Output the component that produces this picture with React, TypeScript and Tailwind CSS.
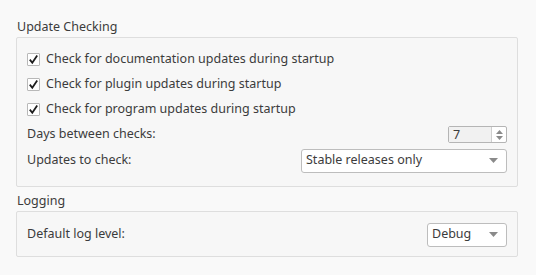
import React from 'react'

function Check({ label }: { label: string }) {
  return (
    <div className="flex items-center h-[25px]">
      <span className="w-[13px] h-[13px] border border-[#b8b8b8] bg-white rounded-[1px] flex items-center justify-center">
        <svg width="11" height="11" viewBox="0 0 11 11">
          <path d="M1.8 5.6 L4.3 8.8 L9.2 1.4" fill="none" stroke="#1e1e1e" strokeWidth="1.8" />
        </svg>
      </span>
      <span className="ml-[6px]">{label}</span>
    </div>
  )
}

function Arrow() {
  return (
    <svg width="9" height="5" viewBox="0 0 9 5"><path d="M0 0 L9 0 L4.5 5 Z" fill="#8a8a8a" /></svg>
  )
}

function Combo({ value, w }: { value: string; w: string }) {
  return (
    <div className={`${w} h-[24px] border border-[#bdbdbd] rounded-[3px] bg-white flex items-center justify-between pl-[4px] pr-[8px]`}>
      <span>{value}</span>
      <Arrow />
    </div>
  )
}

function Group({ title, children }: { title: string; children: React.ReactNode }) {
  return (
    <div>
      <div className="relative z-10 inline-block bg-[#f9f9f9] pl-[1px] pr-[1px] -mb-px leading-[18px]">{title}</div>
      <div className="border border-[#dedede] rounded-[2px] bg-[#f7f7f7] pl-[10px] pr-[10px]">{children}</div>
    </div>
  )
}

export default function App() {
  return (
    <div className="w-[536px] h-[275px] bg-[#f9f9f9] text-[#3c3c3c] text-[12.5px] pt-[18px] pl-[16px] pr-[18px]" style={{ fontFamily: '"Noto Sans", sans-serif' }}>
      <Group title="Update Checking">
        <div className="pt-[9px] pb-[12px]">
          <Check label="Check for documentation updates during startup" />
          <Check label="Check for plugin updates during startup" />
          <Check label="Check for program updates during startup" />
          <div className="flex items-center justify-between h-[26px]">
            <span>Days between checks:</span>
            <div className="w-[59px] h-[17px] border border-[#b5b5b5] rounded-[2px] flex bg-white">
              <div className="flex-1 flex items-center pl-[4px] bg-[#f1f1f1] leading-none">7</div>
              <div className="w-[15px] border-l border-[#cfcfcf] flex flex-col items-center justify-center gap-[2px]">
                <svg width="7" height="4" viewBox="0 0 7 4"><path d="M0 4 L7 4 L3.5 0 Z" fill="#8a8a8a" /></svg>
                <svg width="7" height="4" viewBox="0 0 7 4"><path d="M0 0 L7 0 L3.5 4 Z" fill="#8a8a8a" /></svg>
              </div>
            </div>
          </div>
          <div className="flex items-center justify-between h-[26px]">
            <span>Updates to check:</span>
            <Combo value="Stable releases only" w="w-[206px]" />
          </div>
        </div>
      </Group>
      <div className="h-[5px]" />
      <Group title="Logging">
        <div className="flex items-center justify-between pt-[11px] pb-[9px]">
          <span>Default log level:</span>
          <Combo value="Debug" w="w-[80px]" />
        </div>
      </Group>
    </div>
  )
}
